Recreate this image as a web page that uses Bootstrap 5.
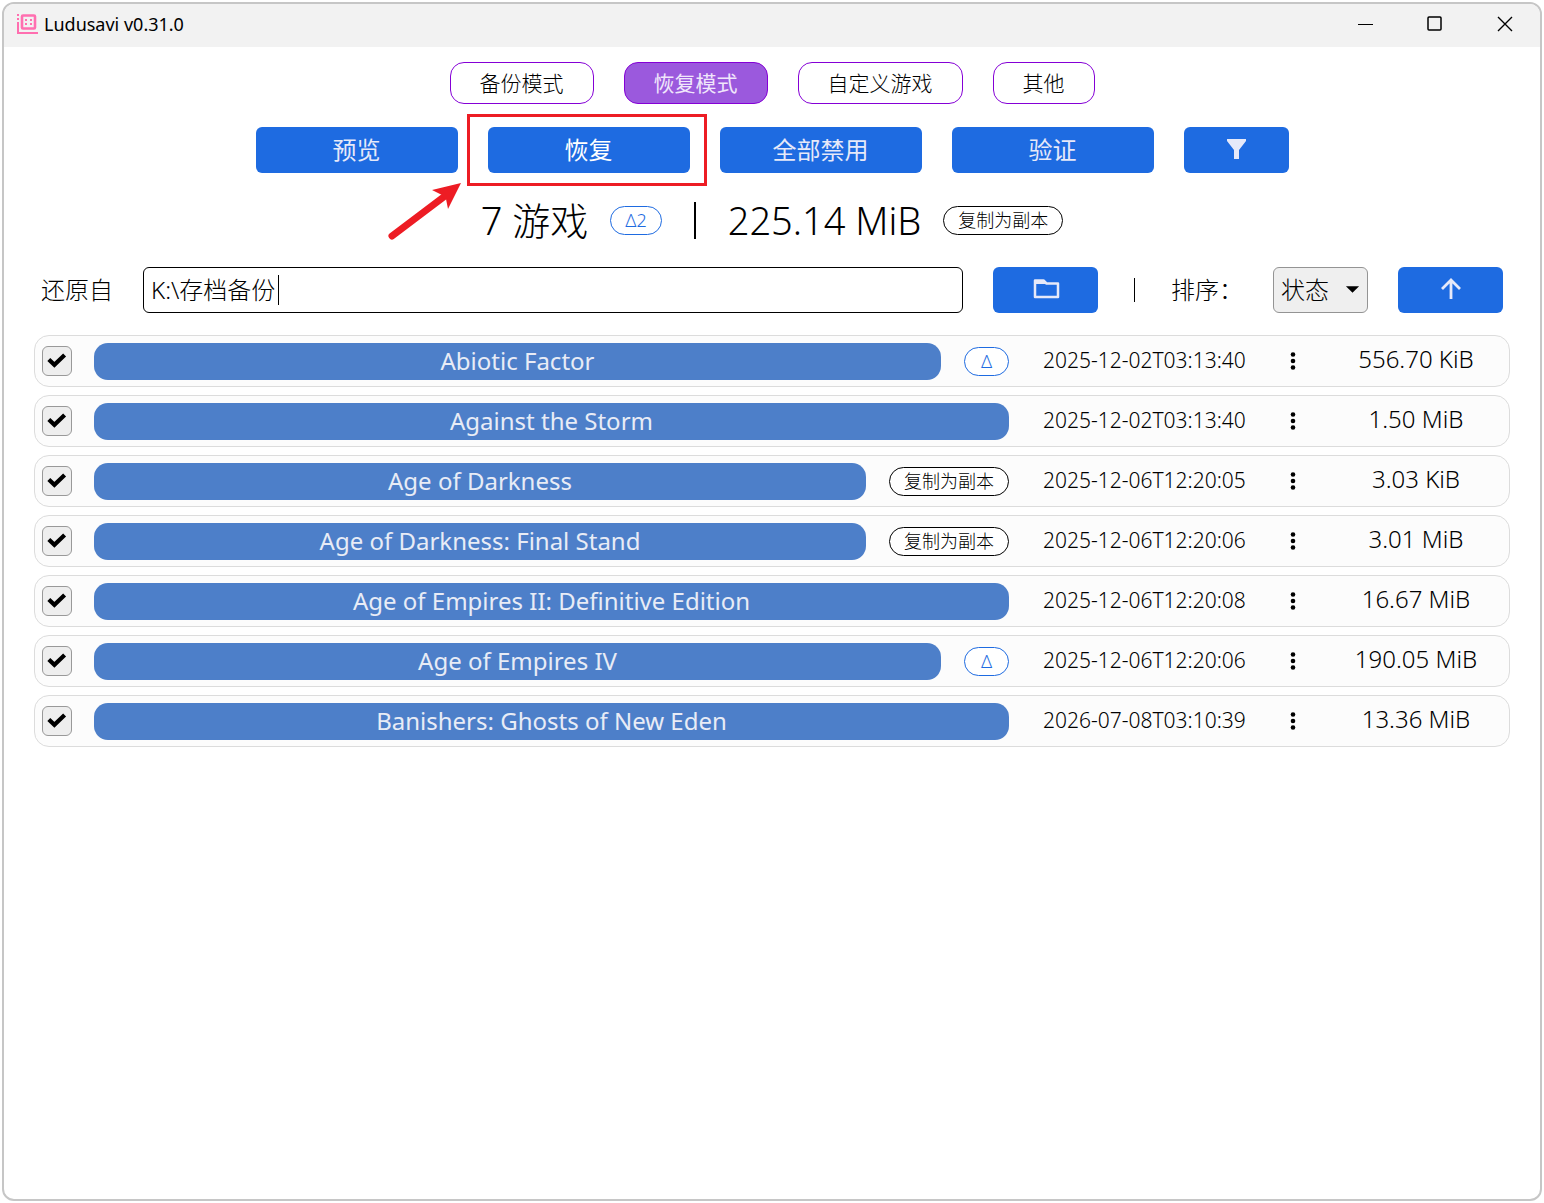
<!DOCTYPE html>
<html lang="zh-CN">
<head>
<meta charset="utf-8">
<meta name="viewport" content="width=device-width, initial-scale=1">
<title>Ludusavi v0.31.0</title>
<link href="https://cdn.jsdelivr.net/npm/bootstrap@5.3.0/dist/css/bootstrap.min.css" rel="stylesheet">
<style>
  :root { --ls-blue: #1e6be1; --ls-name: #4d7fc9; --ls-violet: #8500d6; --ls-onblue: #e6e9f9; --ls-red: #ed1c24; }
  body { font-family: "Noto Sans", "Noto Sans CJK SC", sans-serif; color: #000; font-size: 24px; line-height: 32px; background: #fff; }
  button, input, select { font-family: inherit; }
  .cjk { font-weight: 300; }
  .app-window { min-height: calc(100vh - 4px); margin: 2px; border: 2px solid #c6c6c6; border-radius: 12px; overflow: hidden; }
  .title-bar { height: 43px; background: #f2f2f2; padding: 0 0 3px 12px; }
  .title-bar h1 { font-size: 18px; line-height: 24px; font-weight: 400; margin-left: 6px; }
  .title-bar svg { display: block; }
  .win-btn { width: 70px; height: 40px; border: 0; background: none; padding: 0; display: flex; align-items: center; justify-content: center; }
  .app-body { padding: 15px 30px 30px; }
  .mode-btn { height: 42px; padding: 0 29px; border: 1px solid var(--ls-violet); border-radius: 14px; background: #fff; font-size: 21px; line-height: 28px; font-weight: 300; color: #000; }
  .mode-btn.current { background: #9b59dd; color: #f0e6fb; font-weight: 400; }
  .actions { margin-top: 23px; }
  .act-btn { height: 46px; width: 202px; border: 0; border-radius: 6px; padding: 0; background: var(--ls-blue); color: var(--ls-onblue); display: flex; align-items: center; justify-content: center; font-size: 24px; line-height: 32px; font-weight: 400; }
  .act-btn.small-act { width: 105px; flex: none; padding-bottom: 3px; }
  .act-btn.hovered { color: #fff; }
  .gap-30 { gap: 30px; }
  .callout-box { position: absolute; left: -21px; top: -13px; width: 240px; height: 72px; border: 3px solid var(--ls-red); pointer-events: none; }
  .callout-arrow { position: absolute; left: -101px; top: 55px; pointer-events: none; }
  .stats { height: 48px; margin-top: 23px; font-size: 38px; line-height: 48px; }
  .stat-bar { width: 2px; height: 37px; background: #000; margin: 0 32px; }
  .tag { height: 29px; border: 1px solid #000; border-radius: 15px; background: #fff; font-size: 18px; line-height: 27px; padding: 0 14px; white-space: nowrap; flex: none; }
  .stats .tag { margin-left: 22px; }
  .tag-delta { border-color: var(--ls-blue); color: var(--ls-blue); }
  .row-delta { width: 45px; padding: 0; text-align: center; }
  .source-row { margin-top: 23px; padding: 0 7px; }
  .path-box { height: 46px; border: 1px solid #000; border-radius: 6px; padding: 0 7px 3px; font-size: 24px; color: #000; }
  .text-caret { position: absolute; left: 135px; top: 8px; width: 1px; height: 30px; background: #000; }
  .sort-bar { width: 1px; height: 24px; background: #000; margin: 0 6px; }
  .sort-box { width: 95px; height: 46px; flex: none; border: 1px solid #949494; border-radius: 6px; padding: 0 30px 0 7px; font-size: 24px; color: #000;
    background: #efefef url("data:image/svg+xml,%3csvg xmlns='http://www.w3.org/2000/svg' viewBox='0 0 16 8'%3e%3cpath d='M1 0h14l-7 7z'/%3e%3c/svg%3e") no-repeat right 7px center / 15px 8px; }
  .game-list { margin-top: 22px; gap: 8px; }
  .game { height: 52px; border: 1px solid #dcdcdc; border-radius: 15px; background: #fcfcfc; padding: 0 7px; }
  .game-check.form-check-input { width: 30px; height: 30px; margin: 0 22px 0 0; flex: none; border: 1px solid #999; border-radius: 6px; background-color: #eee; background-size: 28px 28px; }
  .game-check.form-check-input:checked { border-color: #999; background-color: #eee;
    background-image: url("data:image/svg+xml,%3csvg xmlns='http://www.w3.org/2000/svg' viewBox='0 0 28 28'%3e%3cpath fill='none' stroke='%23000' stroke-width='4.2' d='M5.8 12.4l5.600 5.400L21.600 8'/%3e%3c/svg%3e"); }
  .game-name { height: 37px; border: 0; border-radius: 14px; background: var(--ls-name); color: #e8ecf6; font-size: 24px; line-height: 36px; padding: 0 14px; min-width: 0; }
  .game-tags { margin-left: 23px; }
  .game-date { width: 213px; margin-left: 34px; font-size: 21px; line-height: 28px; flex: none; padding-bottom: 3px; }
  .game-menu { width: 74px; height: 36px; border: 0; background: none; padding: 0; flex: none; display: flex; align-items: center; justify-content: center; }
  .game-size { width: 172px; flex: none; text-align: center; font-size: 24px; line-height: 32px; padding-bottom: 4px; }
</style>
<script src="https://cdn.jsdelivr.net/npm/bootstrap@5.3.0/dist/js/bootstrap.bundle.min.js" defer></script>
</head>
<body>
<div class="app-window">
  <header class="title-bar d-flex align-items-center">
    <svg width="22" height="22" viewBox="0 0 22 22" aria-hidden="true"><g fill="#ff6fb0"><rect x="1" y="1" width="2" height="2"/><rect x="1" y="5" width="2" height="2"/><path d="M1 9h2v10h19v2H1z"/></g><rect x="6" y="2.500" width="13" height="13" rx="1" fill="none" stroke="#ff6fb0" stroke-width="2.600"/><g fill="#ff6fb0"><rect x="9" y="6" width="2" height="2"/><rect x="14" y="6" width="2" height="2"/><rect x="9" y="10" width="2" height="2"/><rect x="14" y="10" width="2" height="2"/></g></svg>
    <h1 class="mb-0 me-auto">Ludusavi v0.31.0</h1>
    <button class="win-btn" type="button" aria-label="最小化"><svg width="16" height="16"><path d="M1 8.500h15" stroke="#000"/></svg></button>
    <button class="win-btn" type="button" aria-label="最大化"><svg width="16" height="16" fill="none"><rect x="1" y="1" width="13" height="13" rx="1" stroke="#000" stroke-width="1.500"/></svg></button>
    <button class="win-btn" type="button" aria-label="关闭"><svg width="16" height="16"><path d="M1 1l14 14M15 1L1 15" stroke="#000" stroke-width="1.400"/></svg></button>
  </header>

  <main class="app-body">
    <nav class="d-flex justify-content-center gap-30">
      <button class="mode-btn" type="button">备份模式</button>
      <button class="mode-btn current" type="button" aria-current="page">恢复模式</button>
      <button class="mode-btn" type="button">自定义游戏</button>
      <button class="mode-btn" type="button">其他</button>
    </nav>

    <div class="actions d-flex justify-content-center gap-30">
      <button class="act-btn" type="button">预览</button>
      <div class="position-relative">
        <button class="act-btn hovered" type="button">恢复</button>
        <div class="callout-box"></div>
        <svg class="callout-arrow" width="76" height="60" viewBox="0 0 76 60" aria-hidden="true"><path d="M5 54L58 14" stroke="#ed1c24" stroke-width="7" stroke-linecap="round"/><path d="M74 1L45 8l10 5-1 2 5 2 2 10z" fill="#ed1c24"/></svg>
      </div>
      <button class="act-btn" type="button">全部禁用</button>
      <button class="act-btn" type="button">验证</button>
      <button class="act-btn small-act" type="button" aria-label="筛选"><svg width="22" height="22" viewBox="0 0 22 22"><path d="M2 1h19v2l-7 9v9H9v-9L2 3z" fill="#e6e9f9"/></svg></button>
    </div>

    <div class="stats d-flex justify-content-center align-items-center cjk">
      <span>7 游戏</span>
      <span class="tag tag-delta">Δ2</span>
      <span class="stat-bar"></span>
      <span>225.14 MiB</span>
      <span class="tag">复制为副本</span>
    </div>

    <div class="source-row d-flex align-items-center gap-30 cjk">
      <label for="restore-path">还原自</label>
      <div class="position-relative flex-grow-1">
        <input class="path-box w-100 d-block cjk" id="restore-path" type="text" value="K:\存档备份">
        <span class="text-caret"></span>
      </div>
      <button class="act-btn small-act" type="button" aria-label="浏览"><svg width="28" height="24" viewBox="0 0 28 24"><path d="M3 20V3.500h8.500l3 3H26V20z" fill="none" stroke="#e6e9f9" stroke-width="2.500" stroke-linejoin="round"/><path d="M3 3h9l3 4H3z" fill="#e6e9f9"/></svg></button>
      <span class="sort-bar"></span>
      <label for="sort-key">排序：</label>
      <select class="sort-box form-select cjk" id="sort-key"><option>状态</option></select>
      <button class="act-btn small-act" type="button" aria-label="升序"><svg width="22" height="22" viewBox="0 0 22 22"><path d="M11 21V3M2 11l9-9 9 9" fill="none" stroke="#e6e9f9" stroke-width="2.800"/></svg></button>
    </div>

    <ul class="game-list list-unstyled d-flex flex-column mb-0">
      <li class="game d-flex align-items-center">
        <input class="form-check-input game-check" type="checkbox" checked aria-label="Abiotic Factor">
        <button class="game-name flex-grow-1" type="button">Abiotic Factor</button>
        <span class="tag tag-delta row-delta game-tags cjk">Δ</span>
        <time class="game-date cjk">2025-12-02T03:13:40</time>
        <button class="game-menu" type="button" aria-label="更多"><svg width="6" height="18"><g><circle cx="3" cy="2.500" r="2.300"/><circle cx="3" cy="9" r="2.300"/><circle cx="3" cy="15.500" r="2.300"/></g></svg></button>
        <span class="game-size cjk">556.70 KiB</span>
      </li>
      <li class="game d-flex align-items-center">
        <input class="form-check-input game-check" type="checkbox" checked aria-label="Against the Storm">
        <button class="game-name flex-grow-1" type="button">Against the Storm</button>
        <time class="game-date cjk">2025-12-02T03:13:40</time>
        <button class="game-menu" type="button" aria-label="更多"><svg width="6" height="18"><g><circle cx="3" cy="2.500" r="2.300"/><circle cx="3" cy="9" r="2.300"/><circle cx="3" cy="15.500" r="2.300"/></g></svg></button>
        <span class="game-size cjk">1.50 MiB</span>
      </li>
      <li class="game d-flex align-items-center">
        <input class="form-check-input game-check" type="checkbox" checked aria-label="Age of Darkness">
        <button class="game-name flex-grow-1" type="button">Age of Darkness</button>
        <span class="tag game-tags cjk">复制为副本</span>
        <time class="game-date cjk">2025-12-06T12:20:05</time>
        <button class="game-menu" type="button" aria-label="更多"><svg width="6" height="18"><g><circle cx="3" cy="2.500" r="2.300"/><circle cx="3" cy="9" r="2.300"/><circle cx="3" cy="15.500" r="2.300"/></g></svg></button>
        <span class="game-size cjk">3.03 KiB</span>
      </li>
      <li class="game d-flex align-items-center">
        <input class="form-check-input game-check" type="checkbox" checked aria-label="Age of Darkness: Final Stand">
        <button class="game-name flex-grow-1" type="button">Age of Darkness: Final Stand</button>
        <span class="tag game-tags cjk">复制为副本</span>
        <time class="game-date cjk">2025-12-06T12:20:06</time>
        <button class="game-menu" type="button" aria-label="更多"><svg width="6" height="18"><g><circle cx="3" cy="2.500" r="2.300"/><circle cx="3" cy="9" r="2.300"/><circle cx="3" cy="15.500" r="2.300"/></g></svg></button>
        <span class="game-size cjk">3.01 MiB</span>
      </li>
      <li class="game d-flex align-items-center">
        <input class="form-check-input game-check" type="checkbox" checked aria-label="Age of Empires II: Definitive Edition">
        <button class="game-name flex-grow-1" type="button">Age of Empires II: Definitive Edition</button>
        <time class="game-date cjk">2025-12-06T12:20:08</time>
        <button class="game-menu" type="button" aria-label="更多"><svg width="6" height="18"><g><circle cx="3" cy="2.500" r="2.300"/><circle cx="3" cy="9" r="2.300"/><circle cx="3" cy="15.500" r="2.300"/></g></svg></button>
        <span class="game-size cjk">16.67 MiB</span>
      </li>
      <li class="game d-flex align-items-center">
        <input class="form-check-input game-check" type="checkbox" checked aria-label="Age of Empires IV">
        <button class="game-name flex-grow-1" type="button">Age of Empires IV</button>
        <span class="tag tag-delta row-delta game-tags cjk">Δ</span>
        <time class="game-date cjk">2025-12-06T12:20:06</time>
        <button class="game-menu" type="button" aria-label="更多"><svg width="6" height="18"><g><circle cx="3" cy="2.500" r="2.300"/><circle cx="3" cy="9" r="2.300"/><circle cx="3" cy="15.500" r="2.300"/></g></svg></button>
        <span class="game-size cjk">190.05 MiB</span>
      </li>
      <li class="game d-flex align-items-center">
        <input class="form-check-input game-check" type="checkbox" checked aria-label="Banishers: Ghosts of New Eden">
        <button class="game-name flex-grow-1" type="button">Banishers: Ghosts of New Eden</button>
        <time class="game-date cjk">2026-07-08T03:10:39</time>
        <button class="game-menu" type="button" aria-label="更多"><svg width="6" height="18"><g><circle cx="3" cy="2.500" r="2.300"/><circle cx="3" cy="9" r="2.300"/><circle cx="3" cy="15.500" r="2.300"/></g></svg></button>
        <span class="game-size cjk">13.36 MiB</span>
      </li>
    </ul>
  </main>
</div>
</body>
</html>
